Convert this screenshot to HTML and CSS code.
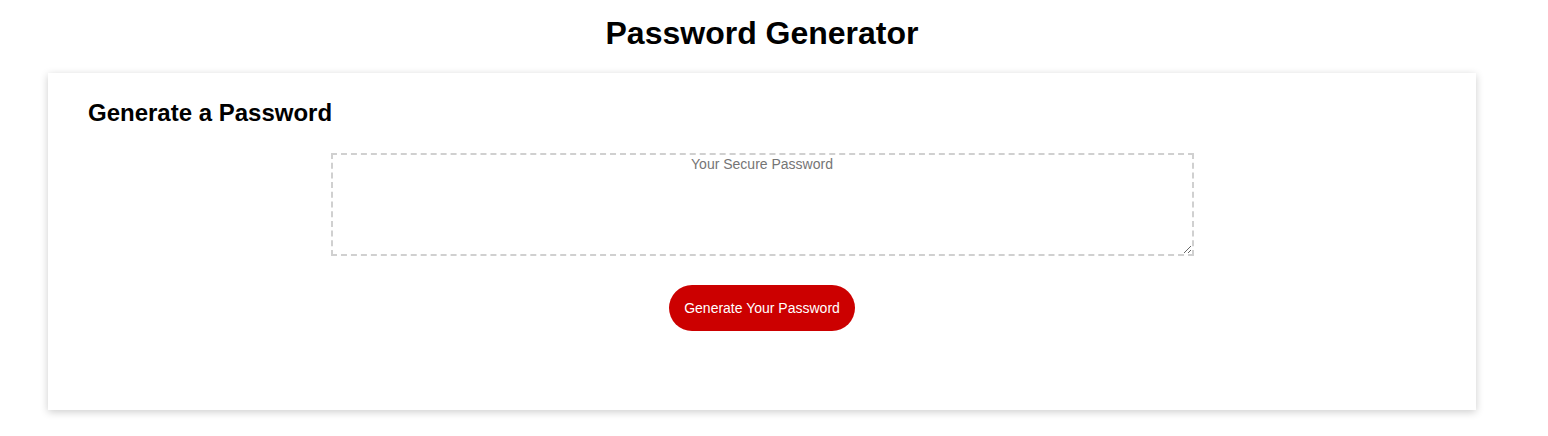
FILE: index.html
```html
<!DOCTYPE html>
<html lang="en">
<head>
<meta charset="UTF-8">
<title>Password Generator</title>
<link rel="stylesheet" href="styles.css">
</head>
<body>
<div class="wrapper">
  <header class="header">
    <h1 class="title">Password Generator</h1>
  </header>
  <div class="card">
    <div class="card-header">
      <h2 class="card-title">Generate a Password</h2>
    </div>
    <div class="card-body">
      <textarea class="password" readonly placeholder="Your Secure Password" aria-label="Generated Password"></textarea>
    </div>
    <div class="card-footer">
      <button class="btn">Generate Your Password</button>
    </div>
  </div>
</div>
</body>
</html>
```

FILE: styles.css
```css
*, *::before, *::after { box-sizing: border-box; }

html, body {
  margin: 0;
  padding: 0;
  background: #ffffff;
  font-family: "Liberation Sans", Arial, sans-serif;
  color: #000000;
}

body {
  min-height: 436px;
}

.wrapper {
  width: 1428px;
  margin-left: 48px;
  padding-top: 15px;
  padding-bottom: 25px;
}

.header {
  text-align: center;
}

.title {
  margin: 0;
  font-size: 32px;
  font-weight: bold;
  line-height: normal;
}

.card {
  margin-top: 21px;
  background: #ffffff;
  box-shadow: 0 2px 8px rgba(0, 0, 0, 0.2);
  padding: 26px 40px 79px;
}

.card-title {
  margin: 0;
  font-size: 24px;
  font-weight: bold;
  line-height: normal;
}

.card-body {
  display: flex;
  justify-content: center;
  padding-top: 26px;
}

.password {
  display: block;
  width: 863px;
  height: 103px;
  margin: 0;
  padding: 1px 10px;
  border: 2px dashed #d0d0d0;
  border-radius: 0;
  font-family: "Liberation Sans", Arial, sans-serif;
  font-size: 14px;
  line-height: normal;
  text-align: center;
  color: #333;
  background: #fff;
  outline: none;
}

.password::placeholder {
  color: #757575;
}

.card-footer {
  display: flex;
  justify-content: center;
  padding-top: 29px;
}

.btn {
  border: none;
  background: #cc0000;
  color: #ffffff;
  font-family: "Liberation Sans", Arial, sans-serif;
  font-size: 14px;
  line-height: 16px;
  padding: 15px 15px;
  border-radius: 25px;
  cursor: pointer;
}
```
